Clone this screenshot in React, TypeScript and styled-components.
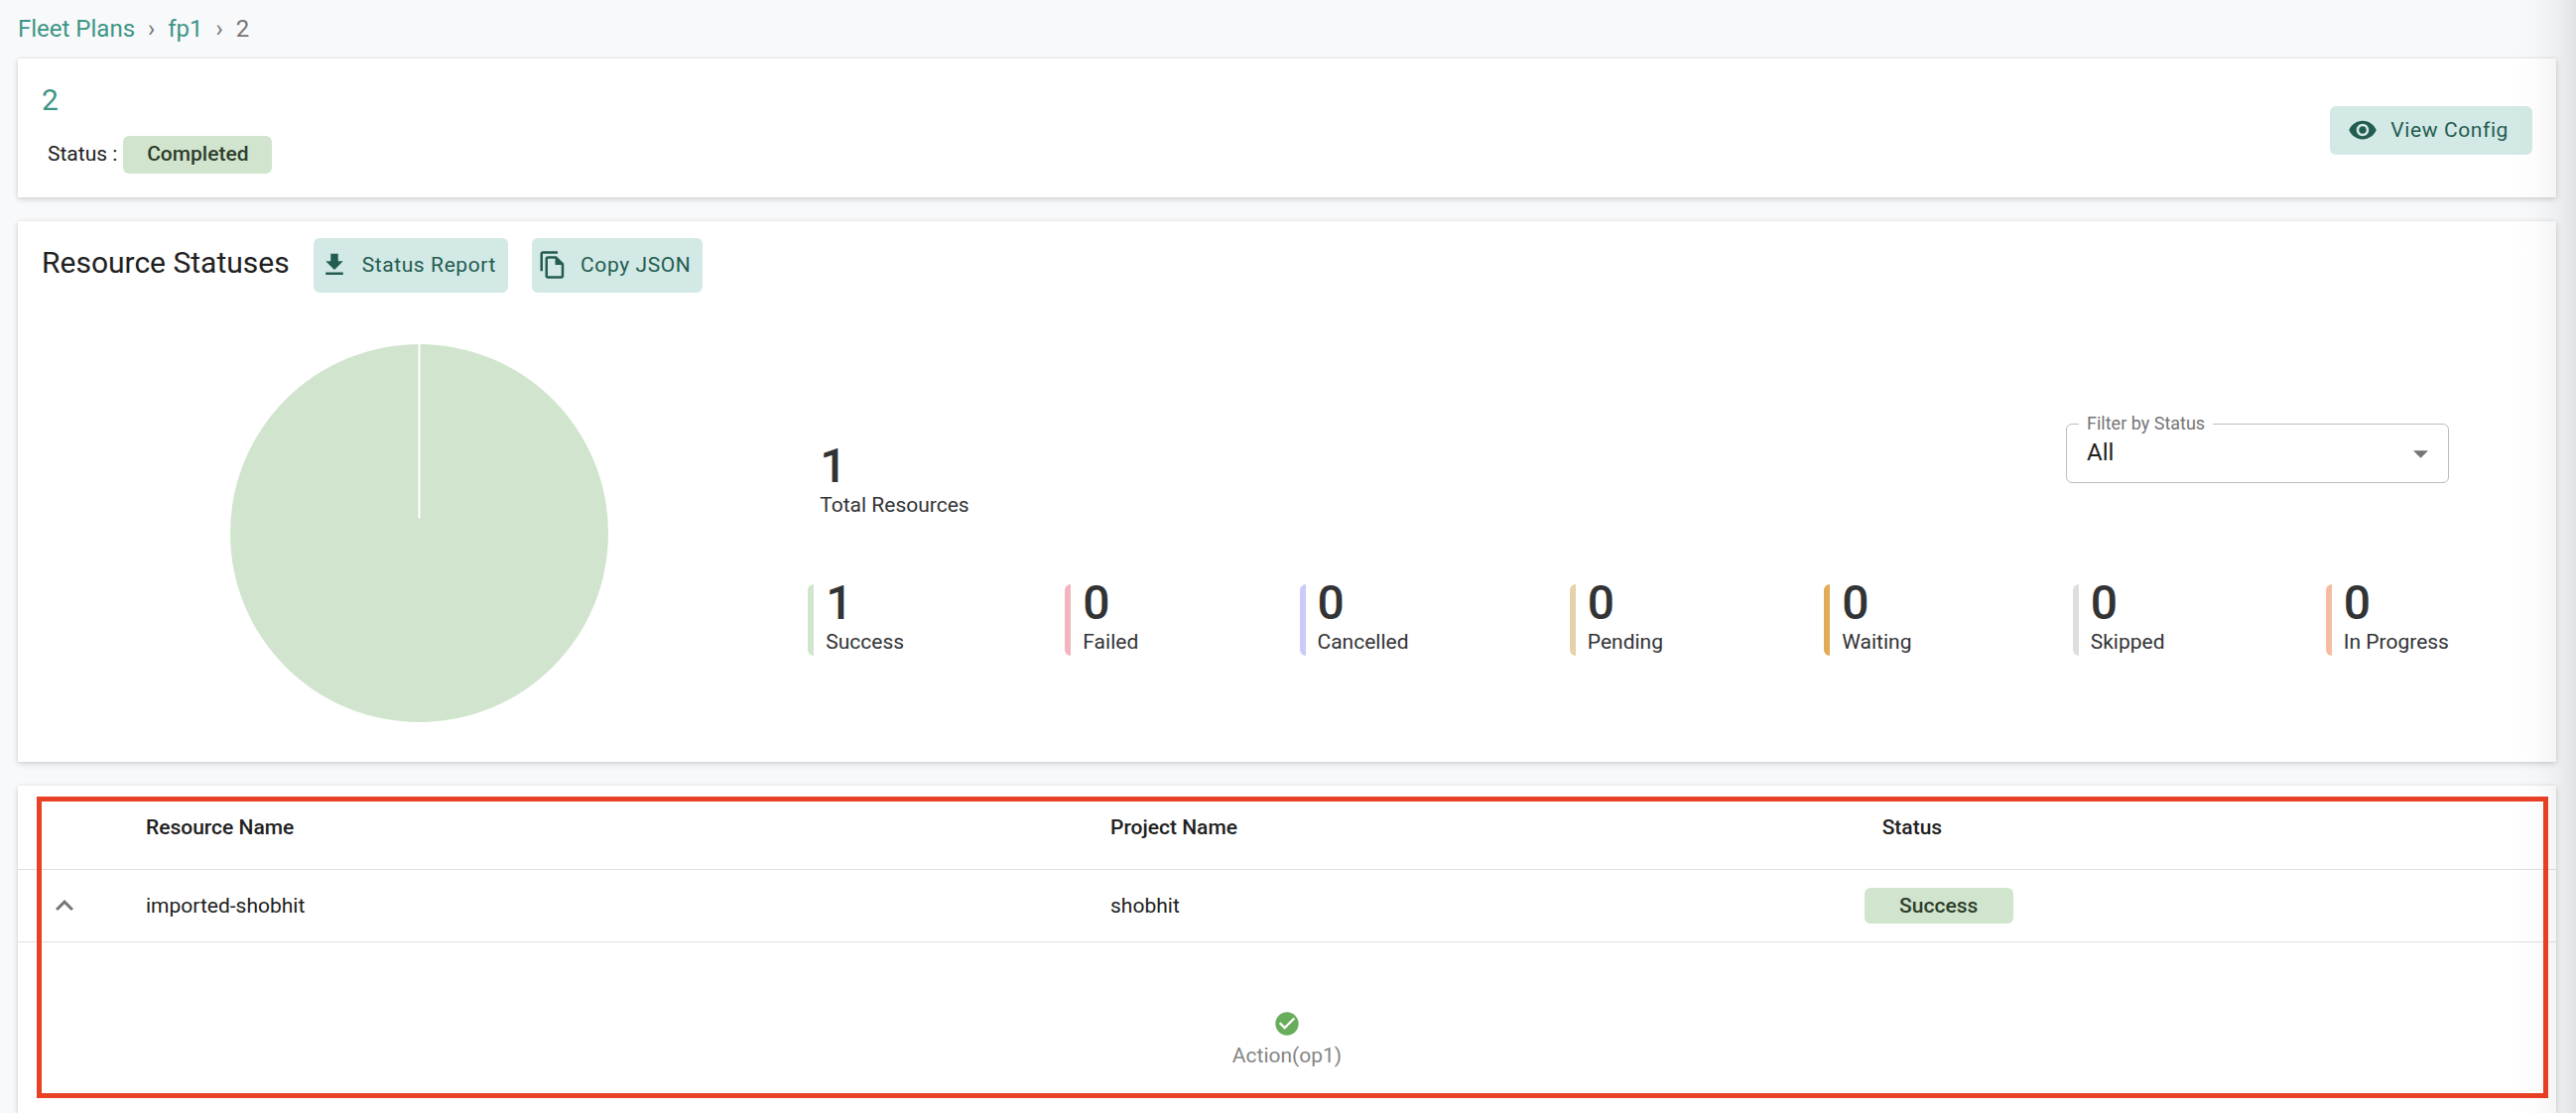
import React, { useState } from 'react';
import styled, { createGlobalStyle } from 'styled-components';
import { MdCheckCircle, MdExpandLess, MdVisibility } from 'react-icons/md';

const color = {
  page: '#f8f9fb',
  link: '#3d9585',
  text: '#212121',
  stat: '#323335',
  muted: '#757575',
  tealSoft: '#d3e9e6',
  tealDark: '#235c50',
  greenSoft: '#d1e5ce',
  greenDark: '#2e3d2c',
  line: '#e0e0e0',
  marker: '#ea4025',
};

const GlobalStyle = createGlobalStyle`
  *, *::before, *::after { box-sizing: border-box; }
  body {
    margin: 0;
    background: ${color.page};
    color: ${color.text};
    font-family: Roboto, "Liberation Sans", sans-serif;
    font-size: 21px;
    line-height: 28px;
  }
`;

const Page = styled.div`
  position: relative;
  display: flex;
  flex-direction: column;
  gap: 24px;
  min-height: 100vh;
  padding: 13px 20px 0 18px;
`;

const DrawerShadow = styled.div`
  position: absolute;
  inset: 0 0 0 auto;
  width: 64px;
  pointer-events: none;
  background: linear-gradient(
    to right,
    rgba(0, 0, 0, 0) 0%,
    rgba(0, 0, 0, 0.01) 35%,
    rgba(0, 0, 0, 0.04) 68%,
    rgba(0, 0, 0, 0.09) 100%
  );
`;

const Breadcrumbs = styled.nav`
  ol {
    display: flex;
    gap: 13px;
    margin: 0 0 -10px;
    padding: 0;
    list-style: none;
    color: ${color.muted};
    font-size: 24px;
    line-height: 32px;
  }
  a {
    color: ${color.link};
    text-decoration: none;
  }
`;

const Card = styled.section`
  background: #fff;
  box-shadow: 0 2px 6px rgba(0, 0, 0, 0.16), 0 0 2px rgba(0, 0, 0, 0.08);
`;

const SummaryCard = styled(Card)`
  display: flex;
  align-items: center;
  justify-content: space-between;
  padding: 28px 24px 24px;
`;

const PlanTitle = styled.h1`
  margin: 0 0 22px;
  color: ${color.link};
  font-size: 30px;
  font-weight: 400;
  line-height: 28px;
`;

const StatusLine = styled.div`
  display: flex;
  align-items: baseline;
  gap: 6px;
  padding-left: 6px;
`;

const Badge = styled.span<{ $tall?: boolean }>`
  display: inline-flex;
  align-items: center;
  justify-content: center;
  min-width: 150px;
  height: ${(p) => (p.$tall ? 38 : 36)}px;
  padding: 0 22px ${(p) => (p.$tall ? 2 : 0)}px;
  border-radius: 6px;
  background: ${color.greenSoft};
  color: ${color.greenDark};
  font-weight: 500;
`;

const ActionButton = styled.button<{ $wide?: boolean }>`
  display: inline-flex;
  align-items: center;
  gap: 13px;
  height: ${(p) => (p.$wide ? 49 : 55)}px;
  padding: ${(p) => (p.$wide ? '0 24px 0 18px' : '0 12px 2px 6px')};
  border: 0;
  border-radius: 6px;
  background: ${color.tealSoft};
  color: ${color.tealDark};
  font: inherit;
  letter-spacing: 0.02857em;
  cursor: pointer;
  svg {
    width: 30px;
    height: 30px;
    fill: currentColor;
  }
`;

const StatusesHeader = styled.header`
  display: flex;
  align-items: flex-start;
  gap: 24px;
  padding: 17px 24px 0;
`;

const SectionTitle = styled.h2`
  margin: 0;
  font-size: 30px;
  font-weight: 400;
  line-height: 50px;
`;

const StatusesBody = styled.div`
  display: grid;
  grid-template-columns: 13fr 27fr;
  align-items: center;
  padding: 52px 108px 40px 0;
`;

const PieWrap = styled.div`
  display: flex;
  justify-content: center;
  padding-left: 12px;
  svg {
    display: block;
    width: 381px;
    height: 381px;
  }
`;

const Figures = styled.div`
  display: grid;
  gap: 66px;
  padding-top: 13px;
`;

const FiguresTop = styled.div`
  display: flex;
  justify-content: space-between;
  min-height: 96px;
`;

const StatRow = styled.div`
  display: flex;
  justify-content: space-between;
`;

const StatBox = styled.div<{ $bar?: string }>`
  display: grid;
  gap: 6px;
  align-self: flex-end;
  padding-left: 12px;
  color: ${color.stat};
  ${(p) => p.$bar && `border-left: 6px solid ${p.$bar}; border-radius: 6px 0 0 6px;`}
`;

const StatValue = styled.span`
  font-size: 48px;
  font-weight: 500;
  line-height: 38px;
`;

const StatLabel = styled.span`
  line-height: 28px;
`;

const Filter = styled.div`
  position: relative;
  width: 386px;
  height: 60px;
  label {
    position: absolute;
    top: -14px;
    left: 13px;
    padding: 0 8px;
    background: #fff;
    color: ${color.muted};
    font-size: 18px;
  }
  select {
    width: 100%;
    height: 100%;
    padding: 0 60px 2px 20px;
    border: 1px solid #bdbdbd;
    border-radius: 6px;
    appearance: none;
    background: transparent;
    color: ${color.text};
    font: inherit;
    font-size: 24px;
  }
  svg {
    position: absolute;
    top: 27px;
    right: 21px;
    width: 15px;
    height: 8px;
    fill: ${color.muted};
    pointer-events: none;
  }
`;

const TableCard = styled(Card)`
  position: relative;
  flex: 1;
`;

/* Red frame that calls out the expanded resource. */
const Highlight = styled.div`
  position: absolute;
  inset: 11px 8px auto 19px;
  height: 304px;
  border: 5px solid ${color.marker};
  pointer-events: none;
`;

const Table = styled.table`
  width: 100%;
  table-layout: fixed;
  border-collapse: separate;
  border-spacing: 0;
  th, td {
    padding: 0 0 0 32px;
    text-align: left;
  }
  th {
    height: 85px;
    border-bottom: 1px solid ${color.line};
    font-weight: 500;
  }
`;

const ResourceRow = styled.tr`
  td {
    height: 73px;
    border-bottom: 1px solid ${color.line};
  }
  td:first-child {
    padding-left: 29px;
  }
  td:last-child {
    padding-left: 14px;
  }
`;

const Col = styled.col<{ $width?: string }>`
  width: ${(p) => p.$width ?? 'auto'};
`;

const ExpandButton = styled.button`
  display: block;
  padding: 0;
  border: 0;
  background: none;
  color: ${color.muted};
  cursor: pointer;
  svg {
    display: block;
    width: 36px;
    height: 36px;
  }
`;

const Operation = styled.div`
  display: flex;
  flex-direction: column;
  align-items: center;
  gap: 4px;
  padding: 68px 32px 44px 0;
  color: #858585;
  svg {
    width: 28px;
    height: 28px;
    color: #67ad5b;
  }
`;

const stats = [
  { label: 'Success', value: 1, bar: '#d1e5ce' },
  { label: 'Failed', value: 0, bar: '#f4b4be' },
  { label: 'Cancelled', value: 0, bar: '#c9cbfb' },
  { label: 'Pending', value: 0, bar: '#e4d3aa' },
  { label: 'Waiting', value: 0, bar: '#e3ab57' },
  { label: 'Skipped', value: 0, bar: '#dedede' },
  { label: 'In Progress', value: 0, bar: '#f5bca3' },
];

function Stat({ label, value, bar }: { label: string; value: number; bar?: string }) {
  return (
    <StatBox $bar={bar}>
      <StatValue>{value}</StatValue>
      <StatLabel>{label}</StatLabel>
    </StatBox>
  );
}

function DownloadIcon() {
  return (
    <svg viewBox="0 0 24 24" aria-hidden="true">
      <path d="M19 9h-4V3H9v6H5l7 7 7-7zM5 18v2h14v-2H5z" />
    </svg>
  );
}

function CopyIcon() {
  return (
    <svg viewBox="0 0 24 24" aria-hidden="true">
      <path d="M16 1H4c-1.1 0-2 .9-2 2v14h2V3h12V1zm-1 4H8c-1.1 0-1.99.9-1.99 2L6 21c0 1.1.89 2 1.99 2H19c1.1 0 2-.9 2-2V11l-6-6zM8 21V7h6v5h5v9H8z" />
    </svg>
  );
}

export default function App() {
  const [filter, setFilter] = useState('All');
  const [open, setOpen] = useState(true);

  return (
    <>
      <GlobalStyle />
      <Page>
        <Breadcrumbs aria-label="Breadcrumb">
          <ol>
            <li><a href="#plans">Fleet Plans</a></li>
            <li aria-hidden="true">›</li>
            <li><a href="#fp1">fp1</a></li>
            <li aria-hidden="true">›</li>
            <li aria-current="page">2</li>
          </ol>
        </Breadcrumbs>

        <SummaryCard>
          <div>
            <PlanTitle>2</PlanTitle>
            <StatusLine>
              <span>Status :</span>
              <Badge $tall>Completed</Badge>
            </StatusLine>
          </div>
          <ActionButton $wide type="button">
            <MdVisibility />
            View Config
          </ActionButton>
        </SummaryCard>

        <Card>
          <StatusesHeader>
            <SectionTitle>Resource Statuses</SectionTitle>
            <ActionButton type="button">
              <DownloadIcon />
              Status Report
            </ActionButton>
            <ActionButton type="button">
              <CopyIcon />
              Copy JSON
            </ActionButton>
          </StatusesHeader>
          <StatusesBody>
            <PieWrap>
              <svg viewBox="0 0 382 382" role="img" aria-label="All resources succeeded">
                <circle cx="191" cy="191" r="191" fill={color.greenSoft} />
                <path d="M191 0V176" stroke="#fff" strokeWidth="2" />
              </svg>
            </PieWrap>
            <Figures>
              <FiguresTop>
                <Stat label="Total Resources" value={1} />
                <Filter>
                  <select id="status-filter" value={filter} onChange={(e) => setFilter(e.target.value)}>
                    <option>All</option>
                    {stats.map((s) => (
                      <option key={s.label}>{s.label}</option>
                    ))}
                  </select>
                  <label htmlFor="status-filter">Filter by Status</label>
                  <svg viewBox="0 0 10 5" aria-hidden="true">
                    <path d="M0 0l5 5 5-5z" />
                  </svg>
                </Filter>
              </FiguresTop>
              <StatRow>
                {stats.map((s) => (
                  <Stat key={s.label} {...s} />
                ))}
              </StatRow>
            </Figures>
          </StatusesBody>
        </Card>

        <TableCard>
          <Table>
            <colgroup>
              <Col $width="97px" />
              <Col $width="38%" />
              <Col $width="30.4%" />
              <Col />
            </colgroup>
            <thead>
              <tr>
                <th aria-label="Expand" />
                <th scope="col">Resource Name</th>
                <th scope="col">Project Name</th>
                <th scope="col">Status</th>
              </tr>
            </thead>
            <tbody>
              <ResourceRow>
                <td>
                  <ExpandButton type="button" aria-label="Toggle details" aria-expanded={open} onClick={() => setOpen(!open)}>
                    <MdExpandLess />
                  </ExpandButton>
                </td>
                <td>imported-shobhit</td>
                <td>shobhit</td>
                <td><Badge>Success</Badge></td>
              </ResourceRow>
              {open && (
                <tr>
                  <td colSpan={4}>
                    <Operation>
                      <MdCheckCircle />
                      <span>Action(op1)</span>
                    </Operation>
                  </td>
                </tr>
              )}
            </tbody>
          </Table>
          <Highlight />
        </TableCard>
        <DrawerShadow />
      </Page>
    </>
  );
}
